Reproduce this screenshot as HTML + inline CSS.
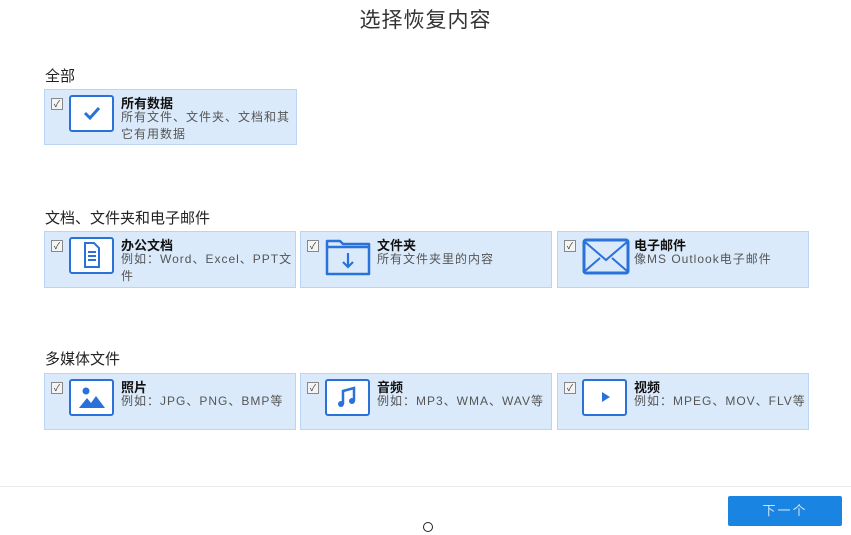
<!DOCTYPE html>
<html><head><meta charset="utf-8"><style>
body{margin:0;width:851px;height:535px;background:#fff;position:relative;overflow:hidden;font-family:"Liberation Sans","Noto Sans CJK SC",sans-serif;color:#222}
.t{position:absolute;left:0;width:851px;top:4px;text-align:center;font-size:21px;color:#333;letter-spacing:1px}
.s{position:absolute;left:45px;font-size:15px;color:#222}
.c{position:absolute;width:252px;height:55px;background:#dbeafb;border:1px solid #b9d5f3;box-sizing:border-box}
.cb{position:absolute;left:6px;top:8px;width:10px;height:10px;border:1px solid #888;background:#f4f4f4;font-size:9px;line-height:10px;text-align:center;color:#333}
.ic{position:absolute;left:24px;top:5px;width:45px;height:37px;border:2px solid #2a72d8;border-radius:3px;box-sizing:border-box;background:#fff}
.ic svg{position:absolute;left:0;top:0}
.ti{position:absolute;left:76px;top:3px;font-size:13px;font-weight:bold;color:#111}
.de{position:absolute;left:76px;top:19px;width:176px;font-size:12px;line-height:17px;color:#555;letter-spacing:1px}
.line{position:absolute;left:0;top:486px;width:851px;height:1px;background:#eaeaea}
.btn{position:absolute;left:728px;top:496px;width:114px;height:30px;background:#1a84e3;border-radius:2px;color:#cfe4f8;font-size:13px;text-align:center;line-height:30px;letter-spacing:2px}
</style></head><body>
<div class="t">选择恢复内容</div>
<div class="s" style="top:65px">全部</div>
<div class="s" style="top:207px">文档、文件夹和电子邮件</div>
<div class="s" style="top:348px">多媒体文件</div>

<div class="c" style="left:44px;top:89px;width:253px;height:56px"><div class="cb">✓</div><div class="ic"><svg width="41" height="33"><path d="M14 16l5 5 9-10" stroke="#2a72d8" stroke-width="3" fill="none"/></svg></div><div class="ti">所有数据</div><div class="de">所有文件、文件夹、文档和其它有用数据</div></div>

<div class="c" style="left:44px;top:231px;height:57px"><div class="cb">✓</div><div class="ic"><svg width="41" height="33"><path d="M14 4h9l5 5v19h-14z M17 13h8 M17 17h8 M17 21h8" stroke="#2a72d8" stroke-width="2" fill="none"/></svg></div><div class="ti">办公文档</div><div class="de">例如：Word、Excel、PPT文件</div></div>
<div class="c" style="left:300px;top:231px;height:57px"><div class="cb">✓</div><div style="position:absolute;left:24px;top:6px"><svg width="48" height="38"><path d="M2 3h13l3 3h26v30h-42z M2 9h42" stroke="#2a72d8" stroke-width="2.5" fill="none" stroke-linejoin="round"/><path d="M23 15v14 M18 24l5 5 5-5" stroke="#2a72d8" stroke-width="2.2" fill="none"/></svg></div><div class="ti">文件夹</div><div class="de">所有文件夹里的内容</div></div>
<div class="c" style="left:557px;top:231px;height:57px"><div class="cb">✓</div><div style="position:absolute;left:24px;top:5px"><svg width="48" height="38"><rect x="2" y="3" width="44" height="33" stroke="#2a72d8" stroke-width="3" fill="none" rx="2"/><path d="M3 5l21 18 21-18 M3 34l15-13 M45 34l-15-13" stroke="#2a72d8" stroke-width="2" fill="none"/></svg></div><div class="ti">电子邮件</div><div class="de">像MS Outlook电子邮件</div></div>

<div class="c" style="left:44px;top:373px;height:57px"><div class="cb">✓</div><div class="ic"><svg width="41" height="33"><circle cx="15" cy="10" r="3.5" fill="#2a72d8"/><path d="M8 27l8-10 4 5 5-7 9 12z" fill="#2a72d8"/></svg></div><div class="ti">照片</div><div class="de">例如：JPG、PNG、BMP等</div></div>
<div class="c" style="left:300px;top:373px;height:57px"><div class="cb">✓</div><div class="ic"><svg width="41" height="33"><path d="M16 23V10l11-3v13" stroke="#2a72d8" stroke-width="2.5" fill="none"/><circle cx="14" cy="23" r="3" fill="#2a72d8"/><circle cx="25" cy="20" r="3" fill="#2a72d8"/></svg></div><div class="ti">音频</div><div class="de">例如：MP3、WMA、WAV等</div></div>
<div class="c" style="left:557px;top:373px;height:57px"><div class="cb">✓</div><div class="ic"><svg width="41" height="33"><path d="M18 11v10l8-5z" fill="#2a72d8"/></svg></div><div class="ti">视频</div><div class="de">例如：MPEG、MOV、FLV等</div></div>

<div class="line"></div>
<div class="btn">下一个</div>
<div style="position:absolute;left:423px;top:522px;width:8px;height:8px;border:1px solid #222;border-radius:50%"></div>
</body></html>
